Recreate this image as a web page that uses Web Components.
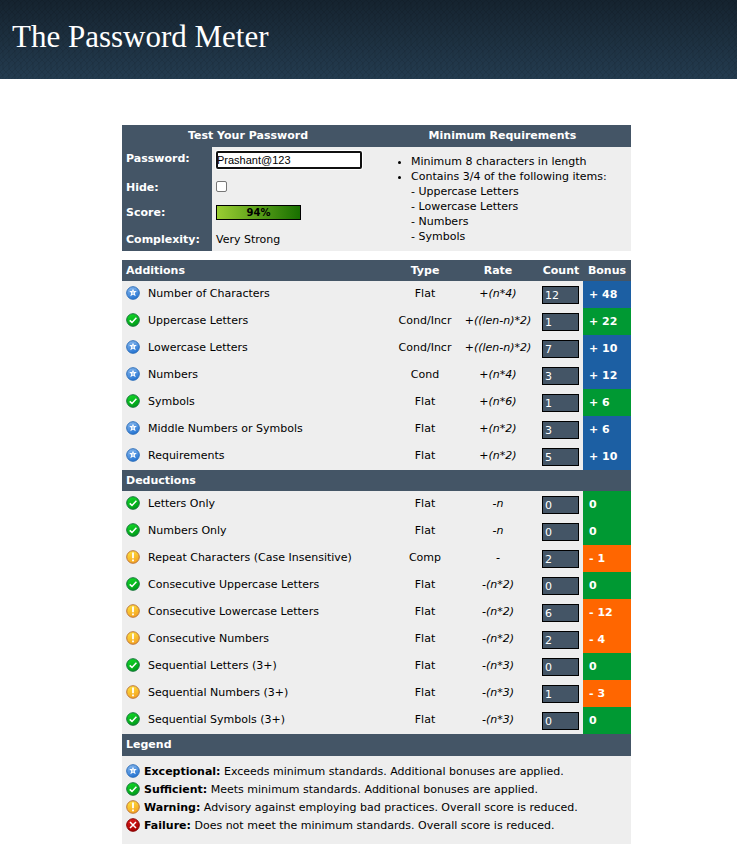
<!DOCTYPE html>
<html lang="en">
<head>
<meta charset="utf-8">
<title>The Password Meter</title>
<style>
  body { margin: 0; background: #fff; color: #000; font: 11px/15px "DejaVu Sans", Verdana, sans-serif; }
</style>
</head>
<body>
<meter-page>
  <site-header slot="header">The Password Meter</site-header>
  <password-panel></password-panel>
  <score-table></score-table>
  <status-legend>
    <legend-item kind="exceptional" term="Exceptional:">Exceeds minimum standards. Additional bonuses are applied.</legend-item>
    <legend-item kind="sufficient" term="Sufficient:">Meets minimum standards. Additional bonuses are applied.</legend-item>
    <legend-item kind="warning" term="Warning:">Advisory against employing bad practices. Overall score is reduced.</legend-item>
    <legend-item kind="failure" term="Failure:">Does not meet the minimum standards. Overall score is reduced.</legend-item>
  </status-legend>
</meter-page>
<script>
function define(name, html, setup) {
  customElements.define(name, class extends HTMLElement {
    constructor() {
      super();
      const t = document.createElement('template');
      t.innerHTML = html;
      this.attachShadow({ mode: 'open' }).append(t.content.cloneNode(true));
    }
    connectedCallback() { if (setup) setup(this, this.shadowRoot); }
  });
}

define('meter-page', `
<style>
  :host { display: block; }
  main { display: flex; flex-direction: column; max-width: 509px; margin: 46px auto 0; padding: 0 0 2px 16px; }
</style>
<slot name="header"></slot>
<main><slot></slot></main>`);

define('site-header', `
<style>
  :host { display: block; position: relative; padding: 19px 12px 24px; background: linear-gradient(#15232f, #243c50); color: #fff; }
  svg { position: absolute; inset: 0; width: 100%; height: 100%; }
  h1 { position: relative; margin: 0; font: 31px/36px "Liberation Serif", Georgia, serif; }
</style>
<svg aria-hidden="true">
  <defs><pattern id="p" width="12" height="12" patternUnits="userSpaceOnUse">
    <path d="M0 0L3 3L6 0L9 3L12 0M0 12L3 9L6 12L9 9L12 12M3 3V9M9 3V9M0 6L3 3M6 6L9 3M6 6L3 9M12 6L9 9" fill="none" stroke="#000" stroke-opacity=".09"/>
  </pattern></defs>
  <rect width="100%" height="100%" fill="url(#p)"/>
</svg>
<h1><slot></slot></h1>`);

const GLYPHS = {
  exceptional: ['#8fbdf0', '#2a78d4', '#2c6db8', '<path d="M7 2.8L8 5.1L10.8 5.1L8.7 7L9.7 10.3L7 8.5L4.3 10.3L5.3 7L3.2 5.1L6 5.1Z" fill="#fff"/><path d="M7 5.6V8" stroke="#78afe9"/>'],
  sufficient: ['#14dc28', '#00a01a', '#14733a', '<path d="M3.7 7.4L6 9.4L10.4 4.8" fill="none" stroke="#fff" stroke-width="1.5"/>'],
  warning: ['#ffe640', '#f5a623', '#bd763b', '<path d="M7 2.6V8.2M7 9.4V11.2" stroke="#fff" stroke-width="1.8"/>'],
  failure: ['#e02020', '#a90000', '#830000', '<path d="M4 4L10 10M10 4L4 10" stroke="#fff" stroke-width="1.5"/>']
};
define('status-icon', `<style>:host { display: block; flex: none; width: 14px; height: 14px; } svg { display: block; width: 100%; height: 100%; }</style>`,
  (el, root) => {
    const kind = el.getAttribute('kind');
    const [light, dark, edge, mark] = GLYPHS[kind];
    root.innerHTML += `<svg viewBox="0 0 14 14" role="img" aria-label="${kind}">
      <defs><linearGradient id="g" x2="0.4" y2="1"><stop stop-color="${light}"/><stop offset="1" stop-color="${dark}"/></linearGradient></defs>
      <circle cx="7" cy="7" r="6.3" fill="url(#g)" stroke="${edge}"/>${mark}</svg>`;
  });

define('password-panel', `
<style>
  :host { display: grid; grid-template-columns: 252fr 257fr; background: #eee; margin-bottom: 9px; }
  h2 { margin: 0; padding: 3px 4px 4px; background: #456; color: #fff; font-size: 11px; line-height: 15px; text-align: center; }
  .form { display: grid; grid-template-columns: 90px 1fr; grid-template-rows: 27px 26px 26px 25px; }
  .form > * { padding: 4px; }
  .name { background: #456; color: #fff; font-weight: bold; }
  .form > .low { padding: 6px 4px 0; }
  .form > .score { padding-top: 5px; }
  #pw { box-sizing: border-box; display: block; width: 146px; height: 18px; margin: 0; padding: 0 1px; border: 0; border-radius: 2px; outline: 2px solid #101010; outline-offset: -2px; box-shadow: 0 0 0 1px #fff; font: 11px/18px "Liberation Sans", Arial, sans-serif; }
  #hide { appearance: none; display: block; box-sizing: border-box; width: 11px; height: 11px; margin: 3px 0 0; border: 1px solid #767676; border-radius: 2px; background: #fff; }
  .bar { box-sizing: border-box; width: 85px; border: 1px solid #000; background: linear-gradient(90deg, #9acd32, #187000); font: bold 10px/13px "DejaVu Sans", sans-serif; text-align: center; }
  ul { margin: 0; padding: 7px 0 7px 37px; }
</style>
<h2>Test Your Password</h2><h2>Minimum Requirements</h2>
<div class="form">
  <label class="name" for="pw">Password:</label><div><input id="pw" type="text" value="Prashant@123"></div>
  <label class="name low" for="hide">Hide:</label><div><input id="hide" type="checkbox"></div>
  <div class="name score">Score:</div><div class="score"><div class="bar">94%</div></div>
  <div class="name low">Complexity:</div><div class="low">Very Strong</div>
</div>
<ul>
  <li>Minimum 8 characters in length</li>
  <li>Contains 3/4 of the following items:<br>- Uppercase Letters<br>- Lowercase Letters<br>- Numbers<br>- Symbols</li>
</ul>`);

const E = 'exceptional', S = 'sufficient', W = 'warning';
const ADDITIONS = [
  [E, 'Number of Characters', 'Flat', '+(n*4)', 12, '+ 48'],
  [S, 'Uppercase Letters', 'Cond/Incr', '+((len-n)*2)', 1, '+ 22'],
  [E, 'Lowercase Letters', 'Cond/Incr', '+((len-n)*2)', 7, '+ 10'],
  [E, 'Numbers', 'Cond', '+(n*4)', 3, '+ 12'],
  [S, 'Symbols', 'Flat', '+(n*6)', 1, '+ 6'],
  [E, 'Middle Numbers or Symbols', 'Flat', '+(n*2)', 3, '+ 6'],
  [E, 'Requirements', 'Flat', '+(n*2)', 5, '+ 10']
];
const DEDUCTIONS = [
  [S, 'Letters Only', 'Flat', '-n', 0, '0'],
  [S, 'Numbers Only', 'Flat', '-n', 0, '0'],
  [W, 'Repeat Characters (Case Insensitive)', 'Comp', '-', 2, '- 1'],
  [S, 'Consecutive Uppercase Letters', 'Flat', '-(n*2)', 0, '0'],
  [W, 'Consecutive Lowercase Letters', 'Flat', '-(n*2)', 6, '- 12'],
  [W, 'Consecutive Numbers', 'Flat', '-(n*2)', 2, '- 4'],
  [S, 'Sequential Letters (3+)', 'Flat', '-(n*3)', 0, '0'],
  [W, 'Sequential Numbers (3+)', 'Flat', '-(n*3)', 1, '- 3'],
  [S, 'Sequential Symbols (3+)', 'Flat', '-(n*3)', 0, '0']
];
const row = ([kind, name, type, rate, count, bonus]) => `
<tr><td class="icon"><status-icon kind="${kind}"></status-icon></td><td>${name}</td><td class="mid">${type}</td>
<td class="mid"><i>${rate}</i></td><td class="count"><input type="text" readonly aria-label="${name} count" value="${count}"></td>
<td class="bonus ${kind}">${bonus}</td></tr>`;

define('score-table', `
<style>
  :host { display: block; background: #eee; }
  table { width: 100%; table-layout: fixed; border-collapse: collapse; }
  th { height: 21px; padding: 0 4px; background: #456; color: #fff; text-align: left; white-space: nowrap; }
  th.mid { padding: 0; }
  td { height: 27px; padding: 5px 4px 7px; box-sizing: border-box; vertical-align: top; white-space: nowrap; }
  .mid { text-align: center; padding-left: 0; padding-right: 0; }
  td.icon { padding: 5px 4px 0; }
  td.count { padding: 5px 3px 0; }
  input { display: block; box-sizing: border-box; width: 37px; height: 18px; margin: 0; padding: 1px 2px 0; border: 1px solid #000; border-radius: 0; background: #456; color: #fff; font: 11px/15px "DejaVu Sans", Verdana, sans-serif; }
  .bonus { padding: 6px 6px; color: #fff; font-weight: bold; }
  .exceptional { background: #1c5fa3; }
  .sufficient { background: #093; }
  .warning { background: #f60; }
</style>
<table>
  <colgroup><col style="width:22px"><col><col style="width:64px"><col style="width:82px"><col style="width:44px"><col style="width:48px"></colgroup>
  <thead><tr><th colspan="2">Additions</th><th class="mid">Type</th><th class="mid">Rate</th><th class="mid">Count</th><th class="mid">Bonus</th></tr></thead>
  <tbody>${ADDITIONS.map(row).join('')}</tbody>
  <tbody><tr><th colspan="6">Deductions</th></tr>${DEDUCTIONS.map(row).join('')}</tbody>
</table>`);

define('status-legend', `
<style>
  :host { display: block; background: #eee; }
  h2 { margin: 0; padding: 3px 4px 4px; background: #456; color: #fff; font-size: 11px; line-height: 15px; }
  div { padding: 6px 4px 10px; }
</style>
<h2>Legend</h2><div><slot></slot></div>`);

define('legend-item', `
<style>
  :host { display: flex; gap: 4px; height: 18px; align-items: center; white-space: nowrap; }
</style>
<span><b></b> <slot></slot></span>`,
  (el, root) => {
    const icon = document.createElement('status-icon');
    icon.setAttribute('kind', el.getAttribute('kind'));
    root.querySelector('span').before(icon);
    root.querySelector('b').textContent = el.getAttribute('term');
  });
</script>
</body>
</html>
